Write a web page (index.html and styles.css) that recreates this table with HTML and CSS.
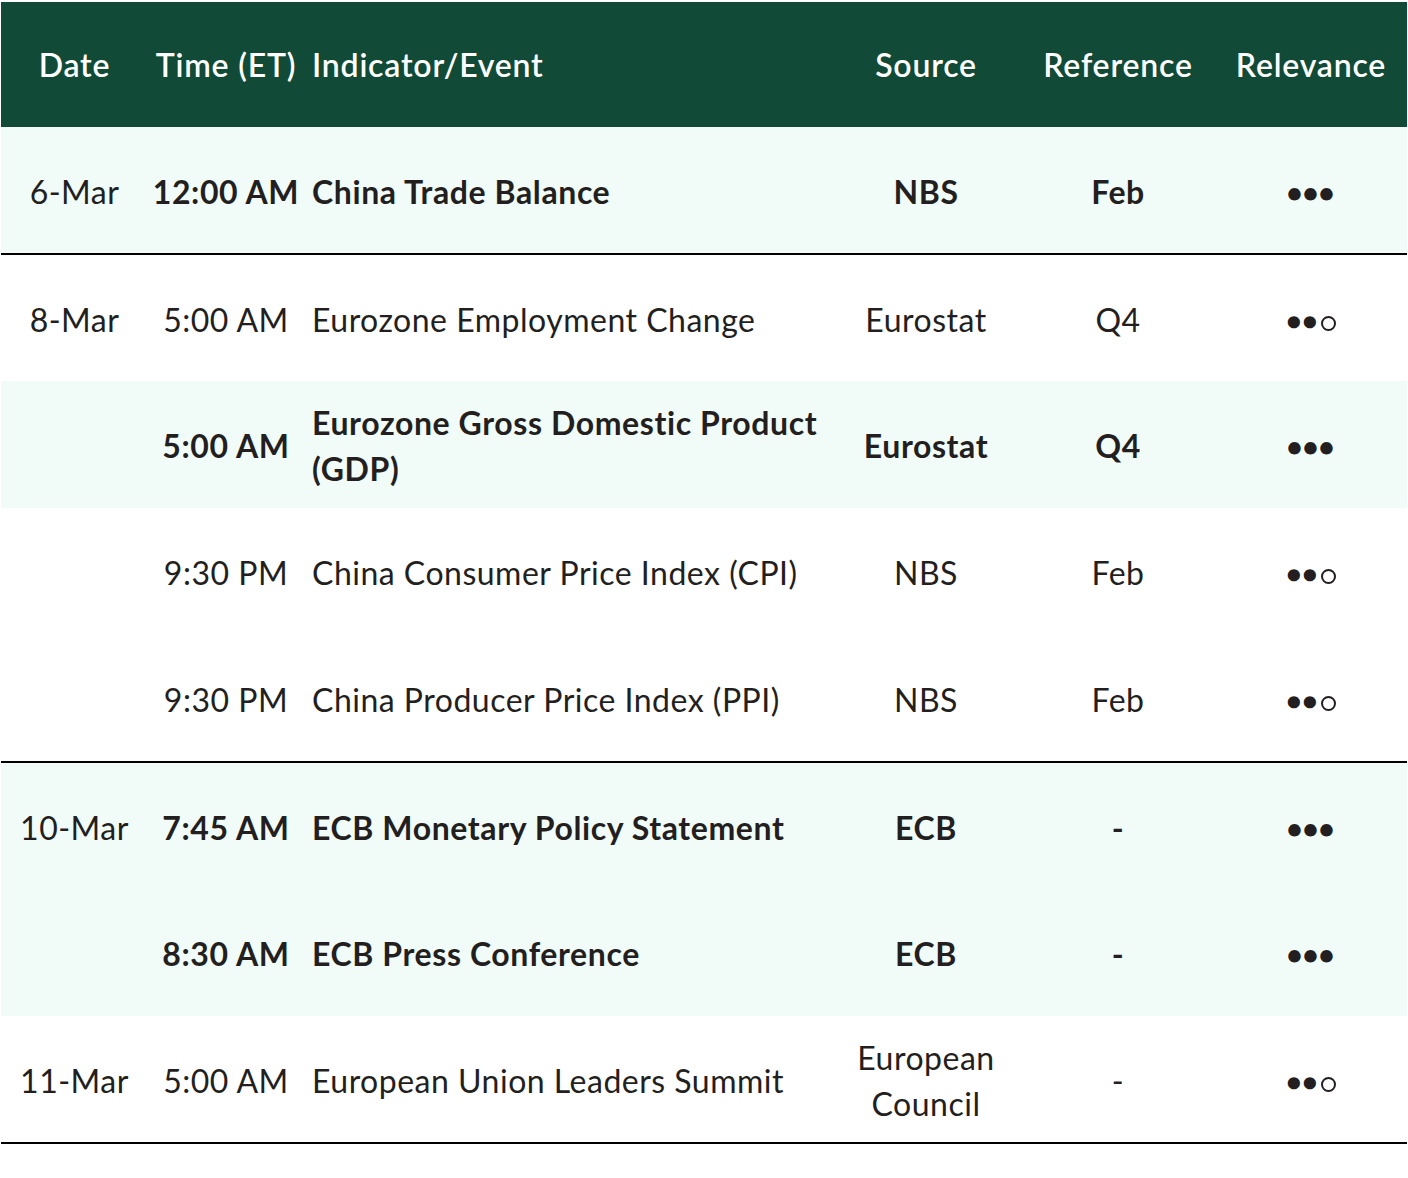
FILE: index.html
```html
<!DOCTYPE html>
<html>
<head>
<meta charset="utf-8">
<link rel="stylesheet" href="styles.css">
</head>
<body>
<table class="cal">
  <colgroup>
    <col class="c-date"><col class="c-time"><col class="c-event"><col class="c-src"><col class="c-ref"><col class="c-rel">
  </colgroup>
  <thead>
    <tr class="head">
      <th>Date</th><th>Time (ET)</th><th class="left">Indicator/Event</th><th>Source</th><th>Reference</th><th>Relevance</th>
    </tr>
  </thead>
  <tbody class="group">
    <tr class="tint strong">
      <td class="date">6-Mar</td><td>12:00 AM</td><td class="left">China Trade Balance</td><td>NBS</td><td>Feb</td><td class="dots">●●●</td>
    </tr>
  </tbody>
  <tbody class="group">
    <tr>
      <td class="date">8-Mar</td><td>5:00 AM</td><td class="left">Eurozone Employment Change</td><td>Eurostat</td><td>Q4</td><td class="dots">●●<span class="ring"></span></td>
    </tr>
    <tr class="tint strong">
      <td class="date"></td><td>5:00 AM</td><td class="left">Eurozone Gross Domestic Product (GDP)</td><td>Eurostat</td><td>Q4</td><td class="dots">●●●</td>
    </tr>
    <tr>
      <td class="date"></td><td>9:30 PM</td><td class="left">China Consumer Price Index (CPI)</td><td>NBS</td><td>Feb</td><td class="dots">●●<span class="ring"></span></td>
    </tr>
    <tr>
      <td class="date"></td><td>9:30 PM</td><td class="left">China Producer Price Index (PPI)</td><td>NBS</td><td>Feb</td><td class="dots">●●<span class="ring"></span></td>
    </tr>
  </tbody>
  <tbody class="group">
    <tr class="tint strong">
      <td class="date">10-Mar</td><td>7:45 AM</td><td class="left">ECB Monetary Policy Statement</td><td>ECB</td><td>-</td><td class="dots">●●●</td>
    </tr>
    <tr class="tint strong">
      <td class="date"></td><td>8:30 AM</td><td class="left">ECB Press Conference</td><td>ECB</td><td>-</td><td class="dots">●●●</td>
    </tr>
    <tr>
      <td class="date">11-Mar</td><td>5:00 AM</td><td class="left">European Union Leaders Summit</td><td>European<br>Council</td><td>-</td><td class="dots">●●<span class="ring"></span></td>
    </tr>
  </tbody>
</table>
</body>
</html>
```

FILE: styles.css
```css
html, body {
  margin: 0;
  padding: 0;
  background: #ffffff;
}
body {
  padding: 2px 1px 0 1px;
  font-family: "Lato", "Liberation Sans", sans-serif;
  color: #231f20;
}
.cal {
  width: 1406px;
  border-collapse: collapse;
  table-layout: fixed;
  font-size: 32px;
  line-height: 46px;
  letter-spacing: 0.5px;
}
.c-date { width: 147px; }
.c-time { width: 156px; }
.c-event { width: 527px; }
.c-src { width: 190px; }
.c-ref { width: 194px; }
.c-rel { width: 192px; }

.head {
  background: #124a38;
  color: #ffffff;
  height: 125px;
}
.head th {
  font-weight: 600;
  text-align: center;
  padding: 0 2px;
  letter-spacing: 0.8px;
}
.cal .left {
  text-align: left;
  padding-left: 8px;
}
.cal td {
  text-align: center;
  vertical-align: middle;
  padding: 3px 2px 0 2px;
  font-weight: 400;
}
.cal td.left { padding-left: 8px; padding-right: 2px; }
.cal tbody tr { height: 127px; }
.group { border-bottom: 2px solid #000000; }
.tint { background: #f1fbf8; }
.strong td { font-weight: 700; letter-spacing: 0.6px; }
.strong td.date { font-weight: 400; letter-spacing: 0.5px; }

.dots {
  font-size: 25px;
  letter-spacing: 1px;
  white-space: nowrap;
}
.strong td.dots { letter-spacing: 1px; }
.ring {
  display: inline-block;
  width: 15px;
  height: 15px;
  border: 2px solid #231f20;
  border-radius: 50%;
  box-sizing: border-box;
  vertical-align: -1px;
  margin-left: 2px;
}
```
